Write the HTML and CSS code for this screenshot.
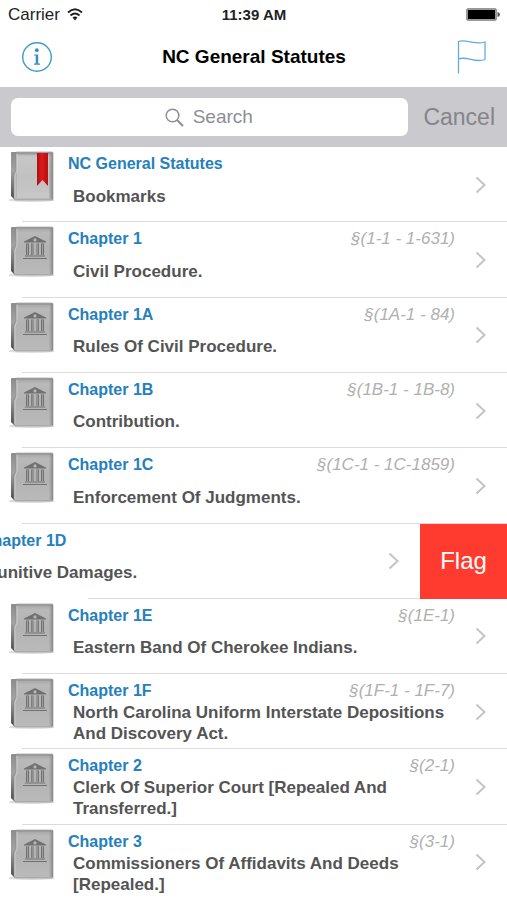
FILE: index.html
```html
<!DOCTYPE html>
<html lang="en">
<head>
<meta charset="utf-8">
<meta name="viewport" content="width=device-width, initial-scale=1">
<title>NC General Statutes</title>
<link rel="stylesheet" href="styles.css">
</head>
<body>
<svg class="defs" aria-hidden="true">
  <defs>
    <linearGradient id="cover" x1="0" y1="0" x2="0" y2="1">
      <stop offset="0" stop-color="#a2a2a2"/>
      <stop offset=".12" stop-color="#b9b9b9"/>
      <stop offset=".5" stop-color="#b2b2b2"/>
      <stop offset="1" stop-color="#bababa"/>
    </linearGradient>
    <linearGradient id="back" x1="0" y1="0" x2="0" y2="1">
      <stop offset="0" stop-color="#8c8c8c"/>
      <stop offset=".4" stop-color="#a2a2a2"/>
      <stop offset="1" stop-color="#4c4c4c"/>
    </linearGradient>
    <linearGradient id="edge" x1="0" y1="0" x2="1" y2="0">
      <stop offset="0" stop-color="#888" stop-opacity="0"/>
      <stop offset="1" stop-color="#888"/>
    </linearGradient>
    <linearGradient id="ribbon" x1="0" y1="0" x2="1" y2="0">
      <stop offset="0" stop-color="#a80f10"/>
      <stop offset=".4" stop-color="#dd1a1b"/>
      <stop offset="1" stop-color="#b90f10"/>
    </linearGradient>
    <symbol id="book" viewBox="0 0 46 52">
      <path d="M0 49Q2 47 5 48H43Q46 49 45 50Q23 52 0 50Z" fill="#ddd"/>
      <path d="M2 2Q2 1 3 1H12V48H5L2 45Z" fill="url(#back)"/>
      <path d="M7 2Q7 1 8 1H43Q44 1 44 2V48Q44 49 43 49H7Q5 49 5 47V24Q5 22 7 20Z" fill="url(#cover)" stroke="#8c8c8c" stroke-width=".6"/>
      <path d="M8 2.500H43" stroke="#9a9a9a" stroke-width="1"/>
      <path d="M8 3V20L6 24V47" fill="none" stroke="#cacaca" stroke-width="1"/>
      <path d="M40 2H44V48H40Z" fill="url(#edge)"/>
    </symbol>
    <symbol id="statute" viewBox="0 0 46 52">
      <use href="#book"/>
      <g fill="#717171">
        <path fill-rule="evenodd" d="M26 10L37 15.500V16.500H15V15.500ZM26 12.300A1.600 1.600 0 1 0 26 15.500A1.600 1.600 0 1 0 26 12.300Z"/>
        <path d="M17 17.500H20V29H17ZM22 17.500H24.500V29H22ZM27.500 17.500H30V29H27.500ZM32 17.500H35V29H32Z"/>
        <path d="M16 29.500H36V30.500H16ZM14 32H38V33H14Z"/>
      </g>
      <path d="M18.500 18V29M23.200 18V29M28.700 18V29M33.500 18V29" stroke="#a4a4a4" stroke-width=".9"/>
    </symbol>
    <symbol id="bookmark" viewBox="0 0 46 52">
      <use href="#book"/>
      <path d="M8 4H40V47H8Z" fill="#fff" opacity=".2"/>
      <path d="M28 2H39V35L33.500 29L28 35Z" fill="url(#ribbon)"/>
    </symbol>
    <symbol id="chevron" viewBox="0 0 12 18">
      <path d="M1.500 1.500L9.500 9L1.500 16.500" fill="none" stroke="#c4c4c8" stroke-width="2"/>
    </symbol>
  </defs>
</svg>

<header>
  <div class="status">
    <div class="carrier">
      <span>Carrier</span>
      <svg width="16" height="13" viewBox="0 0 16 13" aria-label="Wi-Fi">
        <path d="M1 4.500Q8-2 15 4.500M3.500 7.500Q8 3.500 12.500 7.500" fill="none" stroke="#222" stroke-width="1.900"/>
        <path d="M5.500 9.500Q8 7.300 10.500 9.500L8 12.500Z" fill="#222"/>
      </svg>
    </div>
    <time>11:39 AM</time>
    <svg class="battery" width="34" height="13" viewBox="0 0 34 13" aria-label="Battery full">
      <rect x=".5" y=".5" width="30" height="12" rx="1.500" fill="#999" stroke="#999"/>
      <rect x="2" y="2" width="27" height="9" fill="#000"/>
      <path d="M31.500 4Q34 4.500 34 6.500T31.500 9Z" fill="#555"/>
    </svg>
  </div>
  <nav class="nav">
    <button class="icon-button" type="button" aria-label="Information">
      <svg width="32" height="32" viewBox="0 0 32 32">
        <circle cx="16" cy="16" r="14.300" fill="none" stroke="#3f9bc8" stroke-width="1.400"/>
        <circle cx="15.800" cy="9.200" r="1.900" fill="#3590c0"/>
        <path d="M13 13.500H17.200V22.600H19V23.800H13V22.600H14.700V14.600H13Z" fill="#3590c0"/>
      </svg>
    </button>
    <h1>NC General Statutes</h1>
    <button class="icon-button end" type="button" aria-label="Flags">
      <svg width="30" height="34" viewBox="0 0 30 34">
        <path d="M1.500 33.500V1.500C9-1.500 18 5.500 28 2V19.500C18 23.500 10 15.500 1.500 19" fill="none" stroke="#62aed6" stroke-width="1.300"/>
      </svg>
    </button>
  </nav>
  <form class="search" role="search">
    <label class="field">
      <svg width="19" height="19" viewBox="0 0 19 19" aria-hidden="true">
        <circle cx="7.500" cy="7.500" r="6.300" fill="none" stroke="#8e8e93" stroke-width="1.500"/>
        <path d="M12 12L18 18" stroke="#8e8e93" stroke-width="1.900"/>
      </svg>
      <input type="text" placeholder="Search" aria-label="Search">
    </label>
    <button class="cancel" type="button">Cancel</button>
  </form>
</header>

<main>
  <ul class="list">
    <li class="row"><a class="item" href="#bookmarks">
      <svg class="book"><use href="#bookmark"/></svg>
      <div class="body"><div class="head"><h2>NC General Statutes</h2></div><p>Bookmarks</p></div>
      <svg class="chevron"><use href="#chevron"/></svg>
    </a></li>
    <li class="row"><a class="item" href="#c1">
      <svg class="book"><use href="#statute"/></svg>
      <div class="body"><div class="head"><h2>Chapter 1</h2><em>§(1-1 - 1-631)</em></div><p>Civil Procedure.</p></div>
      <svg class="chevron"><use href="#chevron"/></svg>
    </a></li>
    <li class="row"><a class="item" href="#c1a">
      <svg class="book"><use href="#statute"/></svg>
      <div class="body"><div class="head"><h2>Chapter 1A</h2><em>§(1A-1 - 84)</em></div><p>Rules Of Civil Procedure.</p></div>
      <svg class="chevron"><use href="#chevron"/></svg>
    </a></li>
    <li class="row"><a class="item" href="#c1b">
      <svg class="book"><use href="#statute"/></svg>
      <div class="body"><div class="head"><h2>Chapter 1B</h2><em>§(1B-1 - 1B-8)</em></div><p>Contribution.</p></div>
      <svg class="chevron"><use href="#chevron"/></svg>
    </a></li>
    <li class="row"><a class="item" href="#c1c">
      <svg class="book"><use href="#statute"/></svg>
      <div class="body"><div class="head"><h2>Chapter 1C</h2><em>§(1C-1 - 1C-1859)</em></div><p>Enforcement Of Judgments.</p></div>
      <svg class="chevron"><use href="#chevron"/></svg>
    </a></li>
    <li class="row swiped"><a class="item" href="#c1d">
      <svg class="book"><use href="#statute"/></svg>
      <div class="body"><div class="head"><h2>Chapter 1D</h2></div><p>Punitive Damages.</p></div>
      <svg class="chevron"><use href="#chevron"/></svg>
    </a><button class="flag" type="button">Flag</button></li>
    <li class="row"><a class="item" href="#c1e">
      <svg class="book"><use href="#statute"/></svg>
      <div class="body"><div class="head"><h2>Chapter 1E</h2><em>§(1E-1)</em></div><p>Eastern Band Of Cherokee Indians.</p></div>
      <svg class="chevron"><use href="#chevron"/></svg>
    </a></li>
    <li class="row"><a class="item" href="#c1f">
      <svg class="book"><use href="#statute"/></svg>
      <div class="body"><div class="head"><h2>Chapter 1F</h2><em>§(1F-1 - 1F-7)</em></div><p>North Carolina Uniform Interstate Depositions And Discovery Act.</p></div>
      <svg class="chevron"><use href="#chevron"/></svg>
    </a></li>
    <li class="row"><a class="item" href="#c2">
      <svg class="book"><use href="#statute"/></svg>
      <div class="body"><div class="head"><h2>Chapter 2</h2><em>§(2-1)</em></div><p>Clerk Of Superior Court [Repealed And Transferred.]</p></div>
      <svg class="chevron"><use href="#chevron"/></svg>
    </a></li>
    <li class="row"><a class="item" href="#c3">
      <svg class="book"><use href="#statute"/></svg>
      <div class="body"><div class="head"><h2>Chapter 3</h2><em>§(3-1)</em></div><p>Commissioners Of Affidavits And Deeds [Repealed.]</p></div>
      <svg class="chevron"><use href="#chevron"/></svg>
    </a></li>
  </ul>
</main>
</body>
</html>
```
FILE: styles.css
```css
* {
  box-sizing: border-box;
}

body {
  margin: 0;
  min-height: 100vh;
  display: flex;
  flex-direction: column;
  background: #fff;
  color: #545454;
  font-family: "Liberation Sans", Arial, sans-serif;
}

h1, h2, p, ul {
  margin: 0;
  padding: 0;
}

button, input {
  font: inherit;
  border: 0;
  padding: 0;
  background: none;
}

svg {
  display: block;
  flex: none;
}

.defs {
  position: absolute;
  width: 0;
  height: 0;
}

.status {
  display: grid;
  grid-template-columns: 1fr auto 1fr;
  align-items: center;
  height: 29px;
  padding: 0 7px 0 8px;
  color: #222;
}

.carrier {
  display: flex;
  align-items: center;
  gap: 7px;
  font-size: 17px;
}

.status time {
  font-size: 15px;
  font-weight: bold;
}

.battery {
  justify-self: end;
}

.nav {
  display: grid;
  grid-template-columns: 1fr auto 1fr;
  align-items: center;
  height: 58px;
  padding: 0 20px 2px 21px;
}

.nav h1 {
  font-size: 19px;
  line-height: 24px;
  color: #000;
}

.icon-button {
  justify-self: start;
}

.icon-button.end {
  justify-self: end;
}

.search {
  display: flex;
  align-items: center;
  gap: 15px;
  height: 60px;
  padding: 0 12px 0 11px;
  background: #c9c9ce;
}

.field {
  flex: 1;
  display: flex;
  align-items: center;
  justify-content: center;
  gap: 9px;
  height: 38px;
  border-radius: 7px;
  background: #fff;
}

.field input {
  width: 62px;
  font-size: 19px;
  outline: none;
}

.field input::placeholder {
  color: #8e8e93;
  opacity: 1;
}

.cancel {
  font-size: 23px;
  color: #85858a;
}

main {
  flex: 1;
  display: flex;
}

.list {
  flex: 1;
  min-width: 0;
  display: grid;
  grid-auto-rows: 1fr;
  list-style: none;
}

.row {
  position: relative;
  display: flex;
  overflow: hidden;
}

.row::after {
  content: "";
  position: absolute;
  left: 22px;
  right: 0;
  bottom: 0;
  height: 1px;
  background: #dcdcde;
}

.row:last-child::after {
  display: none;
}

.item {
  flex: 0 0 100%;
  display: flex;
  padding: 4px 20px 4px 9px;
  color: inherit;
  text-decoration: none;
}

.book {
  width: 46px;
  height: 52px;
}

.body {
  flex: 1;
  min-width: 0;
  margin-left: 13px;
  padding-top: 3px;
}

.head {
  display: flex;
  justify-content: space-between;
  height: 21px;
  padding-right: 6px;
  line-height: 20px;
}

.head h2 {
  font-size: 16px;
  line-height: 20px;
  color: #2580bd;
}

.head em {
  font-size: 17px;
  color: #b0b0b0;
}

.body p {
  display: flex;
  align-items: center;
  min-height: 42px;
  padding-left: 5px;
  font-size: 17px;
  font-weight: bold;
  line-height: 21px;
}

.chevron {
  align-self: center;
  width: 12px;
  height: 18px;
  margin-left: 14px;
}

.swiped .item {
  margin-left: -87px;
}

.swiped::after {
  left: 88px;
  right: 87px;
}

.flag {
  flex: 0 0 87px;
  background: #ff3b30;
  color: #fff;
  font-size: 24px;
}
```
